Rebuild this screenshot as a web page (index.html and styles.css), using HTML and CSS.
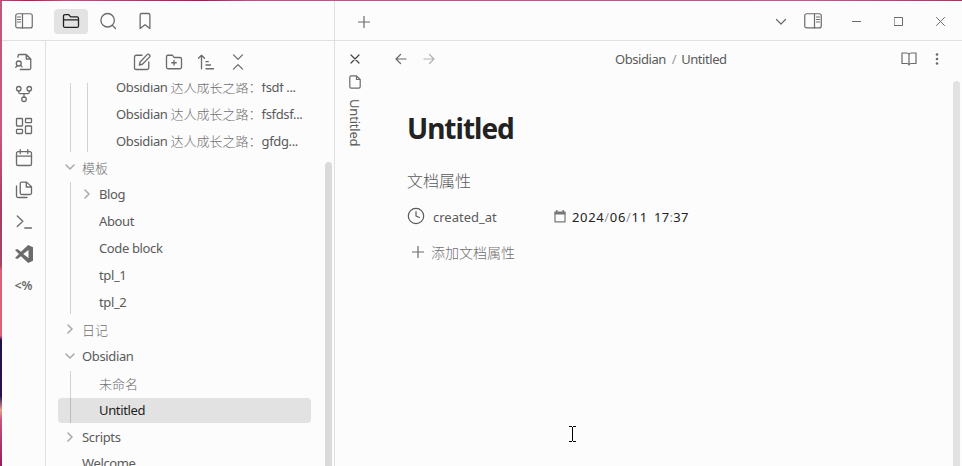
FILE: index.html
```html
<!DOCTYPE html>
<html lang="zh-CN">
<head>
<meta charset="utf-8">
<title>Untitled - Obsidian</title>
<link rel="stylesheet" href="styles.css">
</head>
<body>
<div class="window">
  <header class="titlebar">
    <div class="side-tabs">
      <div class="ic toggle"><svg width="18" height="16" viewBox="0 0 18 16"><rect x=".75" y=".75" width="16.5" height="14.2" rx="2"/><path d="M7.5 1v14M2.5 4h3M2.5 6.5h3M2.5 9h3"/></svg></div>
      <div class="ic tab active"><svg width="18" height="18" viewBox="0 0 24 24"><path d="M22 10.5V18.500a2 2 0 0 1-2 2H4a2 2 0 0 1-2-2V5.500a2 2 0 0 1 2-2h5l2.500 3H20a2 2 0 0 1 2 2v2H2"/></svg></div>
      <div class="ic tab"><svg width="18" height="18" viewBox="0 0 24 24"><circle cx="11.500" cy="11" r="9"/><path d="M22 22l-4-4"/></svg></div>
      <div class="ic tab"><svg width="18" height="18" viewBox="0 0 24 24"><path d="M18.500 22l-6.500-5-6.500 5V4a2 2 0 0 1 2-2h9a2 2 0 0 1 2 2z"/></svg></div>
    </div>
    <div class="main-tabs">
      <svg class="plus" width="12" height="12" viewBox="0 0 12 12"><path d="M6 .5v11M.5 6h11"/></svg>
      <div class="spacer"></div>
      <svg class="chev" width="12" height="8" viewBox="0 0 12 8"><path d="M1.500 1.500L6 6l4.500-4.500"/></svg>
      <svg class="right-toggle" width="18" height="16" viewBox="0 0 18 16"><rect x=".75" y=".75" width="16.500" height="14.200" rx="2"/><path d="M10.500 1v14M12.500 4h3M12.500 6.500h3M12.500 9h3"/></svg>
      <svg class="win" width="9" height="9" viewBox="0 0 9 9"><path d="M0 4.500h9"/></svg>
      <svg class="win" width="9" height="9" viewBox="0 0 9 9"><path d="M.5.5h8v8h-8z"/></svg>
      <svg class="win" width="9" height="9" viewBox="0 0 9 9"><path d="M.5.5l8 8M8.500.5l-8 8"/></svg>
    </div>
  </header>
  <div class="workspace">
    <nav class="ribbon">
      <svg width="18" height="18" viewBox="0 0 24 24"><path d="M4 5.500V4a2 2 0 0 1 2-2h9l6 6v12a2 2 0 0 1-2 2H7M15 2v6h6"/><circle cx="5" cy="14" r="3.300"/><path d="M3 17l-2 2M7.500 16.500L9.500 18.500"/></svg>
      <svg width="18" height="18" viewBox="0 0 24 24"><circle cx="5" cy="5" r="3"/><circle cx="19" cy="5" r="3"/><circle cx="12" cy="19" r="3"/><path d="M5 8v1.500a2 2 0 0 0 2 2h10a2 2 0 0 0 2-2V8M12 11.500V16"/></svg>
      <svg width="18" height="18" viewBox="0 0 24 24"><rect x="2" y="2" width="8" height="10" rx="1"/><rect x="14" y="2" width="8" height="5.500" rx="1"/><rect x="14" y="12" width="8" height="10" rx="1"/><rect x="2" y="16.500" width="8" height="5.500" rx="1"/></svg>
      <svg width="18" height="18" viewBox="0 0 24 24"><rect x="2" y="3.500" width="20" height="18.500" rx="2.500"/><path d="M7 1v5M17 1v5M2 9.500h20"/></svg>
      <svg width="18" height="18" viewBox="0 0 24 24"><path d="M15.500 1.500H9a2 2 0 0 0-2 2V16a2 2 0 0 0 2 2h11a2 2 0 0 0 2-2V7.500zM15 2v6h7M2 6.500V20a2 2 0 0 0 2 2h12"/></svg>
      <svg width="18" height="18" viewBox="0 0 24 24"><path d="M3 4l7.500 7L3 18M13 20h9"/></svg>
      <svg class="solid" width="18" height="18" viewBox="0 0 24 24"><path d="M17.500 0L24 3v18l-6.500 3-9.500-9-5 3.800L0 17.300 5.300 12 0 6.700l3-1.500L8 9zM18 6.800L11 12l7 5.200z"/></svg>
      <span class="templater">&lt;%</span>
    </nav>
    <aside class="explorer">
      <div class="tools">
        <svg width="18" height="18" viewBox="0 0 24 24"><path d="M12 3H4.500A2.500 2.500 0 0 0 2 5.500v14A2.500 2.500 0 0 0 4.500 22h14a2.500 2.500 0 0 0 2.500-2.500V12M18.500 2.500a2.120 2.120 0 0 1 3.500 3L12.500 15l-4 1 1-4z"/></svg>
        <svg width="18" height="18" viewBox="0 0 24 24"><path d="M4 21h16a2 2 0 0 0 2-2V8a2 2 0 0 0-2-2h-8l-2-3H4a2 2 0 0 0-2 2v14c0 1.100.9 2 2 2zM12 10v6M9 13h6"/></svg>
        <svg width="18" height="18" viewBox="0 0 24 24"><path d="M2 7l4-4 4 4M6 3v18M12 11.500h3M12 16h6M12 21h10"/></svg>
        <svg width="18" height="18" viewBox="0 0 24 24"><path d="M6 2.500l6 6 6-6M6 21.500l6-6 6 6"/></svg>
      </div>
      <div class="tree">
        <div class="children deep">
          <div class="row l3">Obsidian <span class="zh">达人成长之路：</span>fsdf ...</div>
          <div class="row l3">Obsidian <span class="zh">达人成长之路：</span>fsfdsf...</div>
          <div class="row l3">Obsidian <span class="zh">达人成长之路：</span>gfdg...</div>
        </div>
        <div class="row"><svg class="arrow open" width="10" height="10" viewBox="0 0 10 10"><path d="M3 1l4 4-4 4"/></svg><span class="zh">模板</span></div>
        <div class="children">
          <div class="row l1"><svg class="arrow" width="10" height="10" viewBox="0 0 10 10"><path d="M3 1l4 4-4 4"/></svg>Blog</div>
          <div class="row l1">About</div>
          <div class="row l1">Code block</div>
          <div class="row l1">tpl_1</div>
          <div class="row l1">tpl_2</div>
        </div>
        <div class="row"><svg class="arrow" width="10" height="10" viewBox="0 0 10 10"><path d="M3 1l4 4-4 4"/></svg><span class="zh">日记</span></div>
        <div class="row"><svg class="arrow open" width="10" height="10" viewBox="0 0 10 10"><path d="M3 1l4 4-4 4"/></svg>Obsidian</div>
        <div class="children">
          <div class="row l1"><span class="zh">未命名</span></div>
          <div class="row l1 selected">Untitled</div>
        </div>
        <div class="row"><svg class="arrow" width="10" height="10" viewBox="0 0 10 10"><path d="M3 1l4 4-4 4"/></svg>Scripts</div>
        <div class="row">Welcome</div>
        <div class="tree-scroll"></div>
      </div>
    </aside>
    <main class="pane">
      <div class="stack-tab">
        <svg class="close" width="10" height="10" viewBox="0 0 10 10"><path d="M1 1l8 8M9 1l-8 8"/></svg>
        <svg class="doc" width="12" height="14" viewBox="0 0 12 14"><path d="M7.500.8H2.200A1.400 1.400 0 0 0 .8 2.200v9.600a1.400 1.400 0 0 0 1.400 1.400h7.600a1.400 1.400 0 0 0 1.400-1.400V4.500zM7.500.8v3.700h3.700"/></svg>
        <span class="vertical">Untitled</span>
      </div>
      <section class="view">
        <div class="view-header">
          <svg width="12" height="12" viewBox="0 0 12 12"><path d="M11 6H1M5.500 1.500L1 6l4.500 4.500"/></svg>
          <svg class="faded" width="12" height="12" viewBox="0 0 12 12"><path d="M1 6h10M6.500 1.500L11 6l-4.500 4.500"/></svg>
          <div class="crumbs"><span>Obsidian</span><span class="sep">/</span><span>Untitled</span></div>
          <svg class="book" width="16" height="14" viewBox="0 0 16 14"><path d="M8 2.500Q7.500 1 5.500 1H1v10.500h5Q7.500 11.500 8 13 8.500 11.500 10 11.500h5V1h-4.500Q8.500 1 8 2.500V13"/></svg>
          <svg class="dots" width="4" height="12" viewBox="0 0 4 12"><circle cx="2" cy="1.500" r="1.300"/><circle cx="2" cy="6" r="1.300"/><circle cx="2" cy="10.500" r="1.300"/></svg>
        </div>
        <article class="note">
          <h1>Untitled</h1>
          <h2>文档属性</h2>
          <div class="property">
            <svg class="clock" width="18" height="18" viewBox="0 0 18 18"><circle cx="9" cy="9" r="7.700"/><path d="M9 4.500V9l3.500 1.500"/></svg>
            <span class="key">created_at</span>
            <svg class="cal" width="12" height="13" viewBox="0 0 12 13"><path class="fill" d="M.5 1.500H2V0h1.500v1.500h5V0H10v1.500h1.500v3H.5z"/><path d="M1 2.500v9.400h10V2.500"/></svg>
            <span class="date">2024<i>/</i>06<i>/</i>11</span><span class="time">17<i>:</i>37</span>
          </div>
          <div class="add"><svg width="12" height="12" viewBox="0 0 12 12"><path d="M6 .5v11M.5 6h11"/></svg>添加文档属性</div>
        </article>
        <div class="view-scroll"></div>
      </section>
    </main>
  </div>
</div>
<svg class="cursor" width="7" height="16" viewBox="0 0 7 16"><path d="M0 .5h3M4 .5h3M3.500 1v14M0 15.500h3M4 15.500h3"/></svg>
</body>
</html>
```
FILE: styles.css
```css
* { box-sizing: border-box; }
body {
  margin: 0;
  height: 466px;
  overflow: hidden;
  padding: 1px 0 0 2px;
  background:
    linear-gradient(90deg, #a8537a 0, #962951 3%, #b05c80 7%, #8c2751 21%, #a85d85 26%, #a8648a 85%, #983c60 100%) 0 0 / 100% 1px no-repeat,
    linear-gradient(#bd5876 0, #c9587a 28%, #a63c67 45%, #a84565 57%, #dc6176 58%, #de6378 72%, #201050 73%, #281050 85%, #eba288 88%, #c4567d 90%, #981b60 100%);
  font-family: "Noto Sans", "Noto Sans CJK SC", sans-serif;
  font-size: 13px;
  color: #5a5a5a;
}
svg { display: block; flex: none; fill: none; stroke: #6b6b6b; stroke-width: 1.200; stroke-linecap: round; stroke-linejoin: round; }
svg[viewBox="0 0 24 24"] { stroke-width: 1.750; }
.zh { font-family: "Noto Sans CJK SC", sans-serif; font-weight: 300; color: #707070; letter-spacing: 0; }
.window { height: 465px; background: #fcfcfc; display: flex; flex-direction: column; }
.titlebar { height: 40px; flex: none; display: flex; border-bottom: 1px solid #e0e0e0; }
.side-tabs { width: 333px; border-right: 1px solid #e0e0e0; display: flex; align-items: center; padding: 1px 0 0 13px; }
.ic { display: flex; align-items: center; justify-content: center; }
.toggle { margin-right: 21px; }
.tab { width: 34px; height: 25px; margin-right: 3px; border-radius: 4px; }
.active { background: #e3e3e3; }
.active svg { stroke: #222; }
.main-tabs { flex: 1; display: flex; align-items: center; padding: 3px 17px 0 23px; }
.spacer { flex: 1; }
.plus { margin-top: -1px; }
.chev { margin-right: 17px; }
.right-toggle { margin-right: 30px; margin-top: -2px; }
.win { stroke-width: 1; margin-left: 33px; margin-top: -2px; }
.right-toggle + .win { margin-left: 0; }
.workspace { flex: 1; min-height: 0; display: flex; }
.ribbon { width: 44px; border-right: 1px solid #e0e0e0; display: flex; flex-direction: column; align-items: center; gap: 14px; padding-top: 12px; }
.solid { fill: #6b6b6b; fill-rule: evenodd; stroke: none; }
.templater { font: 600 12.500px/18px "Noto Sans", sans-serif; color: #6b6b6b; }
.explorer { width: 289px; border-right: 1px solid #e0e0e0; display: flex; flex-direction: column; }
.tools { display: flex; gap: 14px; padding: 12px 0 0 87px; height: 42px; }
.tree { flex: 1; min-height: 0; overflow: hidden; position: relative; padding: 0 23px 0 12px; }
.tree::before { content: ""; display: block; margin-top: -8.700px; }
.row { position: relative; height: 24.950px; margin-bottom: 2px; padding-left: 24px; line-height: 25px; white-space: pre; border-radius: 4px; letter-spacing: -.360px; }
.l1 { padding-left: 41px; }
.l3 { padding-left: 58px; }
.selected { background: #e2e2e2; color: #222; }
.arrow { position: absolute; left: 7px; top: 7px; stroke: #ababab; stroke-width: 1.600; }
.l1 .arrow { left: 24px; }
.open { transform: rotate(90deg); }
.children { position: relative; }
.children::before { content: ""; position: absolute; z-index: 1; left: 12px; top: 0; bottom: 1px; border-left: 1px solid #d2d2d2; }
.deep::after { content: ""; position: absolute; left: 29px; top: 0; bottom: 1px; border-left: 1px solid #d2d2d2; }
.selected::before { content: ""; position: absolute; z-index: 2; left: 12px; top: 0; bottom: 0; border-left: 1px solid #bdbdbd; }
.tree-scroll { position: absolute; right: 2px; top: 79px; width: 7px; height: 400px; border-radius: 4px; background: #dadada; }
.pane { flex: 1; display: flex; min-width: 0; }
.stack-tab { width: 40px; display: flex; flex-direction: column; align-items: center; padding-top: 13px; }
.close { stroke: #444; }
.doc { margin: 11px 0 10px; }
.vertical { writing-mode: vertical-rl; font-size: 13px; line-height: 18px; letter-spacing: -.2px; margin-right: 1px; }
.view { flex: 1; position: relative; }
.view-header { height: 36px; display: flex; align-items: center; padding-left: 20px; }
.faded { opacity: .5; margin-left: 16px; }
.crumbs { display: flex; margin-left: 180px; width: 113px; letter-spacing: -.450px; }
.sep { margin: 0 5px 0 6px; color: #999; }
.book { margin-left: 173px; }
.dots { fill: #6b6b6b; stroke: none; margin-left: 18px; }
.note { padding-left: 32px; }
h1 { margin: 31px 0 0; font-size: 28px; line-height: 40px; font-weight: 700; letter-spacing: -1px; color: #222; }
h2 { margin: 20px 0 0; font: 300 16px/24px "Noto Sans CJK SC", sans-serif; color: #5a5a5a; }
.property { display: flex; align-items: center; height: 26px; margin-top: 11px; }
.clock { stroke: #5a5a5a; }
.key { width: 121px; margin-left: 8px; padding-top: 2px; }
.date, .time { color: #222; font-size: 13px; padding-top: 2px; }
.date { margin-left: 6px; width: 82px; letter-spacing: .650px; }
.time { letter-spacing: .3px; }
i { font-style: normal; color: #999; }
.cal { stroke: #777; stroke-linecap: butt; }
.cal .fill { fill: #777; stroke: none; }
.add { display: flex; align-items: center; gap: 7px; margin: 12px 0 0 5px; height: 22px; font: 300 14px/22px "Noto Sans CJK SC", sans-serif; color: #707070; }
.view-scroll { position: absolute; right: 2px; top: 40px; width: 7px; height: 400px; background: #e2e2e2; border-radius: 4px; }
.cursor { position: absolute; left: 569px; top: 426px; stroke: #000; stroke-width: 1; stroke-linecap: butt; }
```
